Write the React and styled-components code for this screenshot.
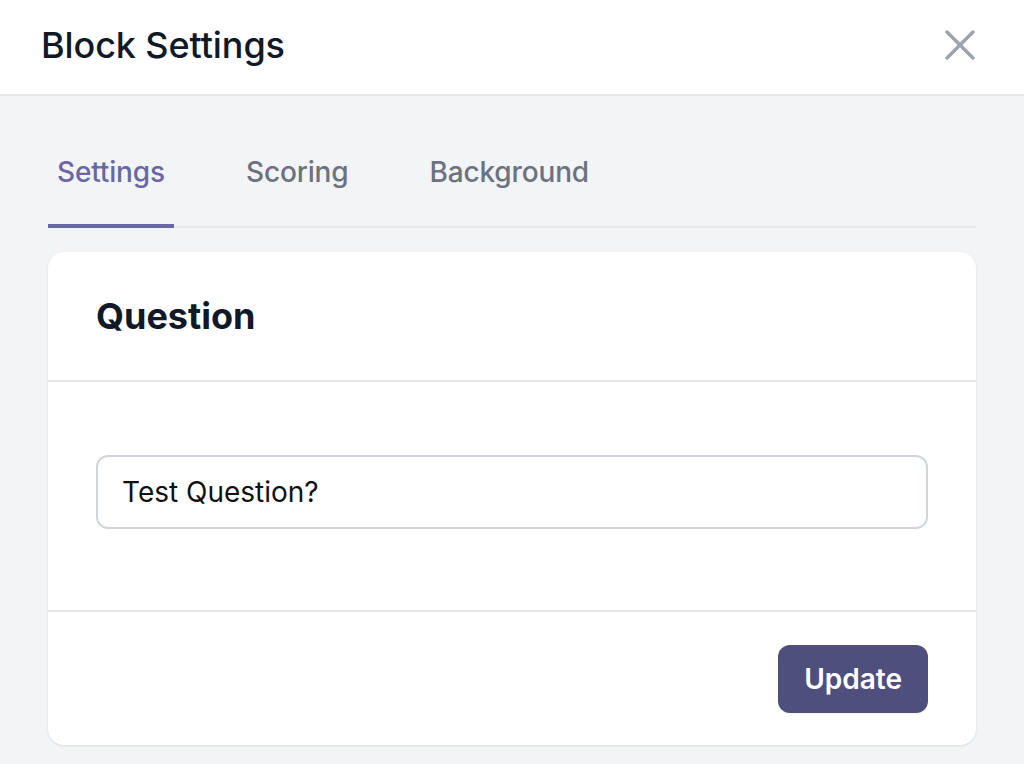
import React from "react";
import styled, { createGlobalStyle } from "styled-components";

const GlobalStyle = createGlobalStyle`
  html, body {
    margin: 0;
    padding: 0;
    background: #f3f4f6;
    font-family: Inter, "Noto Sans", sans-serif;
    -webkit-font-smoothing: antialiased;
  }
  * { box-sizing: border-box; }
`;

const Page = styled.div`
  width: 1024px;
  height: 764px;
  display: flex;
  flex-direction: column;
  background: #f3f4f6;
  overflow: hidden;
`;

const Header = styled.header`
  height: 96px;
  flex-shrink: 0;
  display: flex;
  align-items: center;
  justify-content: space-between;
  padding: 0 49px 4px 41px;
  background: #ffffff;
  border-bottom: 2px solid #e5e7eb;
`;

const Title = styled.h1`
  margin: 0;
  font-size: 36px;
  font-weight: 500;
  color: #111827;
  letter-spacing: -0.1px;
`;

const CloseButton = styled.button`
  display: flex;
  padding: 0;
  border: 0;
  background: none;
  color: #9ca3af;
  cursor: pointer;
`;

const Body = styled.main`
  padding: 0 48px;
`;

const Tabs = styled.nav`
  display: flex;
  gap: 63px;
  height: 132px;
  align-items: flex-end;
  border-bottom: 2px solid #e5e7eb;
`;

const Tab = styled.button`
  height: 78px;
  margin-bottom: -2px;
  padding: 0 9px 30px;
  border: 0;
  border-bottom: 4px solid ${(p) => (p.active ? "#6a67a4" : "transparent")};
  background: none;
  font-family: inherit;
  font-size: 28px;
  font-weight: 500;
  letter-spacing: -0.15px;
  color: ${(p) => (p.active ? "#6a67a4" : "#6b7280")};
  display: flex;
  align-items: center;
`;

const Card = styled.section`
  margin-top: 24px;
  background: #ffffff;
  border-radius: 16px;
  box-shadow: 0 1px 3px rgba(0, 0, 0, 0.08), 0 1px 2px rgba(0, 0, 0, 0.04);
  overflow: hidden;
`;

const CardHeader = styled.div`
  height: 130px;
  display: flex;
  align-items: center;
  padding: 0 48px;
  border-bottom: 2px solid #e5e7eb;
`;

const CardTitle = styled.h2`
  margin: 0;
  font-size: 36px;
  font-weight: 700;
  color: #111827;
`;

const CardBody = styled.div`
  padding: 73px 48px 81px;
  border-bottom: 2px solid #e5e7eb;
`;

const TextInput = styled.input`
  width: 100%;
  height: 74px;
  padding: 0 24px;
  border: 2px solid #d1d5db;
  border-radius: 12px;
  font-family: inherit;
  font-size: 28px;
  color: #111111;
  background: #ffffff;
  outline: none;
`;

const CardFooter = styled.div`
  display: flex;
  justify-content: flex-end;
  padding: 33px 48px 32px;
`;

const PrimaryButton = styled.button`
  height: 68px;
  padding: 0 26px;
  border: 0;
  border-radius: 12px;
  background: #4f4f7d;
  color: #ffffff;
  font-family: inherit;
  font-size: 28px;
  font-weight: 600;
  box-shadow: 0 1px 2px rgba(0, 0, 0, 0.06);
`;

function CloseIcon() {
  return (
    <svg width="30" height="30" viewBox="0 0 30 30" fill="none">
      <path
        d="M2 2L28 28M28 2L2 28"
        stroke="currentColor"
        strokeWidth="3.4"
        strokeLinecap="round"
      />
    </svg>
  );
}

const tabs = ["Settings", "Scoring", "Background"];

export default function App() {
  return (
    <Page>
      <GlobalStyle />
      <Header>
        <Title>Block Settings</Title>
        <CloseButton aria-label="Close">
          <CloseIcon />
        </CloseButton>
      </Header>
      <Body>
        <Tabs>
          {tabs.map((t, i) => (
            <Tab key={t} active={i === 0}>
              {t}
            </Tab>
          ))}
        </Tabs>
        <Card>
          <CardHeader>
            <CardTitle>Question</CardTitle>
          </CardHeader>
          <CardBody>
            <TextInput defaultValue="Test Question?" />
          </CardBody>
          <CardFooter>
            <PrimaryButton>Update</PrimaryButton>
          </CardFooter>
        </Card>
      </Body>
    </Page>
  );
}
